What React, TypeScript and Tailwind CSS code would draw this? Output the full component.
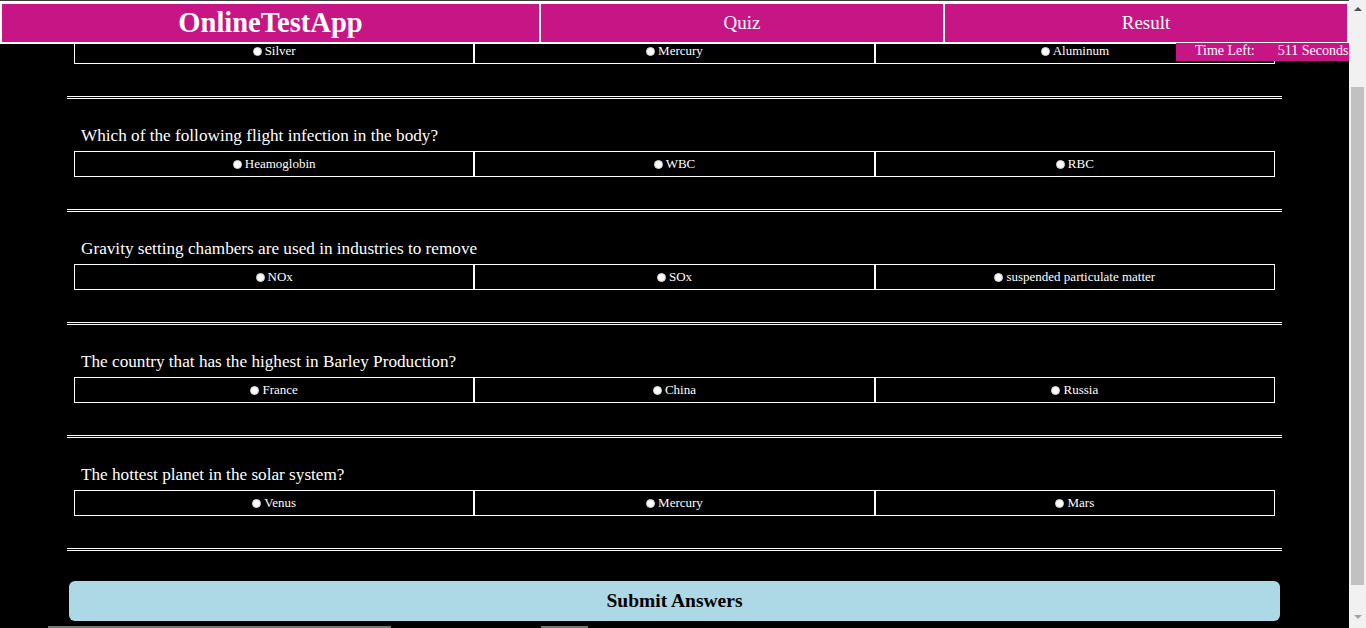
import React from "react";

type Q = { text: string; options: string[] };

// first question sits under the fixed header (page is scrolled)
const questions: Q[] = [
  { text: "", options: ["Silver", "Mercury", "Aluminum"] },
  { text: "Which of the following flight infection in the body?", options: ["Heamoglobin", "WBC", "RBC"] },
  { text: "Gravity setting chambers are used in industries to remove", options: ["NOx", "SOx", "suspended particulate matter"] },
  { text: "The country that has the highest in Barley Production?", options: ["France", "China", "Russia"] },
  { text: "The hottest planet in the solar system?", options: ["Venus", "Mercury", "Mars"] },
];

function Question({ q }: { q: Q }) {
  return (
    <div>
      <div className="border-t-[3px] border-double border-white" />
      <p className="mt-[25px] mb-[3px] h-[24px] pl-[14px] text-[17.2px] leading-[24px] text-white">{q.text}</p>
      <div className="mx-[7px] grid grid-cols-3">
        {q.options.map((o) => (
          <label
            key={o}
            className="flex h-[26px] items-center justify-center gap-[3px] border border-white text-[13px] text-white"
          >
            <span className="h-[9px] w-[9px] rounded-full border border-[#d0d0d0] bg-white" />
            {o}
          </label>
        ))}
      </div>
      <div className="h-[32px]" />
    </div>
  );
}

function Scrollbar() {
  return (
    <div className="flex h-[628px] w-[17px] flex-col items-center bg-[#f1f1f1]">
      <div className="mt-[7px] h-0 w-0 border-x-[4px] border-b-[4px] border-x-transparent border-b-[#505050]" />
      <div className="mt-[76px] h-[498px] w-[13px] bg-[#c1c1c1]" />
      <div className="mt-[30px] h-0 w-0 border-x-[4px] border-t-[4px] border-x-transparent border-t-[#a3a3a3]" />
    </div>
  );
}

export default function App() {
  return (
    <div className="flex h-[628px] w-[1366px] overflow-hidden bg-black font-['Liberation_Serif',serif]">
      <div className="relative h-[628px] w-[1349px] overflow-hidden">
        {/* fixed header */}
        <div className="absolute left-0 top-0 z-10 w-[1349px]">
          <div className="h-px bg-[#3c3c3c]" />
          <div className="grid grid-cols-[537px_402px_402px] gap-[2px] bg-white px-[2px] pb-[2px] pt-[3px]">
            <div className="flex h-[38px] items-center justify-center bg-[#c71585] text-[28.5px] font-bold text-white">
              OnlineTestApp
            </div>
            <div className="flex h-[38px] items-center justify-center bg-[#c71585] text-[19px] text-white">Quiz</div>
            <div className="flex h-[38px] items-center justify-center bg-[#c71585] text-[19px] text-white">Result</div>
          </div>
        </div>

        {/* timer */}
        <div className="absolute left-[1176px] top-[43px] z-20 flex h-[18px] w-[173px] items-center overflow-hidden whitespace-nowrap bg-[#c71585] pb-[3px] text-[14px] text-white">
          <span className="pl-[19px]">Time Left:</span>
          <span className="pl-[23px]">511 Seconds</span>
        </div>

        <div className="mx-auto -mt-[17px] w-[1215px]">
          {questions.map((q, i) => (
            <Question key={i} q={q} />
          ))}
          <div className="border-t-[3px] border-double border-white" />
          <button className="mx-[2px] mt-[30px] flex h-[40px] w-[1211px] items-center justify-center rounded-md bg-[#add8e6] text-[19.5px] font-bold text-black">
            Submit Answers
          </button>
        </div>
        <div className="mt-[5px] flex gap-[150px] pl-[48px]">
          <div className="h-[2px] w-[343px] bg-[#777]" />
          <div className="h-[2px] w-[47px] bg-[#777]" />
        </div>
      </div>
      <Scrollbar />
    </div>
  );
}
